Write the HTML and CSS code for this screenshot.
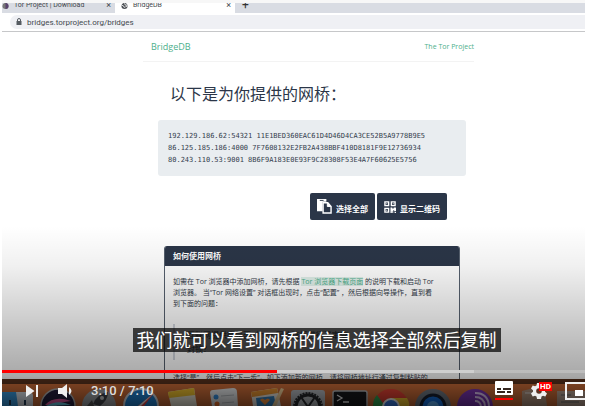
FILE: index.html
```html
<!DOCTYPE html>
<html lang="zh-CN">
<head>
<meta charset="utf-8">
<title>BridgeDB</title>
<link rel="stylesheet" href="styles.css">
</head>
<body>
<main class="player">
  <div class="tabs">
    <div class="tab">
      <svg class="favicon" viewBox="0 0 8 8"><circle cx="4" cy="4" r="3.5" fill="#777"/><path d="M4 .5a3.500 3.500 0 0 1 0 7z" fill="#59436d"/></svg>
      <span class="tab-title">Tor Project | Download</span><button class="tab-close" aria-label="关闭">×</button>
    </div>
    <div class="tab tab-active">
      <svg class="favicon" viewBox="0 0 8 8"><circle cx="4" cy="4" r="3.500" fill="#4b4f54"/><path d="M1 3l2 1 1 2M4 1l1 2h2M5 5l2-1" stroke="#fff" fill="none"/></svg>
      <span class="tab-title">BridgeDB</span><button class="tab-close" aria-label="关闭">×</button>
    </div>
    <button class="tab-new" aria-label="新标签页">+</button>
  </div>
  <div class="toolbar">
    <div class="address">
      <svg class="lock" viewBox="0 0 6 8"><path d="M1.500 3V2a1.500 1.500 0 0 1 3 0v1" fill="none" stroke="#555b61"/><rect x=".5" y="3" width="5" height="4" fill="#555b61"/></svg>
      <input class="url" type="text" aria-label="地址" value="bridges.torproject.org/bridges">
    </div>
  </div>

  <section class="page">
    <nav class="site-nav">
      <a class="brand" href="#">BridgeDB</a>
      <a class="project" href="#">The Tor Project</a>
    </nav>
    <div class="content">
      <h1>以下是为你提供的网桥：</h1>
      <pre class="bridges">192.129.186.62:54321 11E1BED360EAC61D4D46D4CA3CE52B5A9778B9E5
86.125.185.186:4000 7F7608132E2FB2A438BBF410D8181F9E12736934
80.243.110.53:9001 8B6F9A183E0E93F9C28308F53E4A7F60625E5756</pre>
      <div class="actions">
        <button class="action">
          <svg class="action-icon" viewBox="0 0 16 16"><path d="M0 0h10v3H6v10H0z" fill="#fff"/><path d="M3 1.500h4" stroke="#2b3648"/><path d="M6.500 4h5l3.500 4v7H6.500z" fill="#2b3648" stroke="#fff" stroke-width="1.500"/><path d="M11 4v4h4" fill="#fff" stroke="#fff"/></svg>
          <span>选择全部</span>
        </button>
        <button class="action">
          <svg class="action-icon action-qr" viewBox="0 0 13 13"><g fill="none" stroke="#fff" stroke-width="1.500"><path d="M1 1h4v4H1zM8 1h4v4H8zM1 8h4v4H1z"/></g><path d="M2.500 2.500h1v1h-1zM9.500 2.500h1v1h-1zM2.500 9.500h1v1h-1zM7 7h2v1h1.500V7H13v4h-2v-1h-1v3H9v-2H8.500v2H7zM11.500 12H13v1h-1.500z" fill="#fff"/></svg>
          <span>显示二维码</span>
        </button>
      </div>
      <article class="panel">
        <h2>如何使用网桥</h2>
        <div class="panel-body">
          <p>如需在 Tor 浏览器中添加网桥，请先根据 <a href="#">Tor 浏览器下载页面</a> 的说明下载和启动 Tor<br>浏览器。 当“Tor 网络设置” 对话框出现时，点击“配置” ，然后根据向导操作，直到看<br>到下面的问题：</p>
          <blockquote>互联网提供商是否对 Tor 网络连接进行了审查<br>封锁？</blockquote>
          <p>选择“是”，然后点击“下一步”。如下添加新的网桥，请将网桥地址行通过复制粘贴的</p>
        </div>
      </article>
    </div>
  </section>

  <div class="dock">
    <svg class="dock-icons" viewBox="0 0 583 22" preserveAspectRatio="xMinYMin slice" aria-hidden="true">
      <path d="M0 8h16v14H0z" fill="#3ba0e8"/><path d="M14 8h13q4 0 4 4v10H16z" fill="#e4eaf2"/><path d="M8 16v5M23 16v5" stroke="#23405c" stroke-width="2"/>
      <circle cx="56" cy="22" r="17" fill="#252040" stroke="#bbb" stroke-width="1.500"/><path d="M43 21q9-10 26-4-11 1-15 5z" fill="#e75ca5"/><path d="M44 22q12-7 25-1z" fill="#64d5ee"/>
      <circle cx="97" cy="22" r="17" fill="#a5a9ad"/><path d="M91 20q4-10 15-12 0 8-8 14z" fill="#44484f"/><circle cx="100" cy="14" r="2" fill="#ddd"/><path d="M90 16l-5 6h7z" fill="#555"/>
      <circle cx="139" cy="22" r="17" fill="#2188dc" stroke="#dce2e8" stroke-width="2"/><path d="M152 9l-10 13h-6z" fill="#fa4642"/><path d="M152 9l-16 13h3z" fill="#fff"/>
      <path d="M166 8l26-4 3 18h-26z" fill="#f4f0df"/><path d="M166 8l26-4 1 7-26 3z" fill="#f5c62e"/>
      <path d="M208 9q0-3 3-3l20-2q4 0 4 4l1 14h-26z" fill="#edf0f2"/><circle cx="214" cy="13" r="2.500" fill="#3695e8"/><circle cx="215" cy="20" r="2.500" fill="#f4762e"/><path d="M219 12l13-1M220 19l12-1" stroke="#bbc0c4"/>
      <path d="M249 8l26-4 4 18h-28z" fill="#f1eee7"/><path d="M249 8l26-4 1 5-26 4z" fill="#ee9834"/><path d="M254 14l18-2 2 10h-19z" fill="#3787c7"/><path d="M263 21l-5-5q2-3 5 0 3-3 5 0z" fill="#ff9a43"/><path d="M279 4l3 1-8 17h-4z" fill="#f6d49d"/>
      <rect x="289" y="6" width="34" height="24" rx="3" fill="#b9bec3"/><circle cx="306" cy="23" r="14" fill="none" stroke="#292c30" stroke-width="2" stroke-dasharray="2 1"/><circle cx="306" cy="23" r="12" fill="none" stroke="#25282c" stroke-width="3"/><path d="M306 23L299 13M306 23l7-10" stroke="#292c30" stroke-width="2"/>
      <rect x="331" y="7" width="34" height="23" rx="2" fill="#17191c" stroke="#b7babd" stroke-width="1.500"/><path d="M335 11l5 3-5 3M341 18h6" fill="none" stroke="#eee" stroke-width="1.300"/>
      <circle cx="389" cy="23" r="18" fill="#ea4335"/><path d="M371 22q0-7 4-11l8 11z" fill="#34a853"/><path d="M389 14h16q3 5 2 8h-12z" fill="#fbcb30"/><circle cx="389" cy="23" r="8" fill="#3b81eb" stroke="#fff" stroke-width="2"/>
      <circle cx="431" cy="23" r="18" fill="#737c87"/><circle cx="431" cy="23" r="12" fill="#1676e8" stroke="#172032" stroke-width="3"/><circle cx="431" cy="23" r="6" fill="#63b6ff"/>
      <circle cx="473" cy="23" r="18" fill="#7d36b6"/><g fill="none" stroke="#e5cdf7" stroke-width="2"><path d="M473 17q5 0 6 5M473 13q9 0 10 9M473 9q13 0 14 13"/></g>
      <path d="M520 7l12-3 11 3 2 15h-25z" fill="#aaa69f" opacity=".7"/><path d="M523 9h18" stroke="#ddd"/>
      <path d="M555 7h30v15h-30z" fill="#b4afa9" opacity=".8"/><path d="M559 11h10M559 18h18" stroke="#696969"/>
    </svg>
  </div>

  <div class="shade"></div>
  <div class="overlay">
    <p class="caption">我们就可以看到网桥的信息选择全部然后复制</p>
    <input class="seek" type="range" min="0" max="430" value="190" aria-label="播放进度">
    <div class="controls">
      <button class="control" aria-label="下一个"><svg width="12" height="12" viewBox="0 0 12 12"><path d="M0 0l8.500 6L0 12zM10 0h2v12h-2z" fill="#eee"/></svg></button>
      <button class="control volume" aria-label="音量"><svg width="15" height="14" viewBox="0 0 15 14"><path d="M0 4h4l5-4v14l-5-4H0z" fill="#eee"/><path d="M11 3q5 4 0 8z" fill="#eee"/></svg></button>
      <span class="time">3:10 / 7:10</span>
      <div class="controls-right">
        <button class="control" aria-label="字幕"><svg width="18" height="20" viewBox="0 0 18 20"><rect width="18" height="14" rx="1" fill="#fff"/><path d="M2 7h4v2H2zM8 7h8v2H8zM2 10h8v2H2zM12 10h4v2h-4z" fill="#35251e"/><path d="M0 17h18v2H0z" fill="red"/></svg></button>
        <button class="control settings" aria-label="设置"><svg width="16" height="16" viewBox="0 0 16 16"><path d="M6 0h4l.5 2.500 1.500.8L14.300 2.400l1.700 3.200-2 1.600v1.600l2 1.600-1.700 3.200-2.300-.9-1.500.8L10 16H6l-.5-2.500-1.500-.8-2.300.9L0 10.400l2-1.600V7.200L0 5.600l1.700-3.200 2.300.9 1.500-.8z" fill="#eee"/><circle cx="8" cy="8" r="2.800" fill="#5b3120"/></svg><span class="badge">HD</span></button>
        <button class="control" aria-label="迷你播放器"><svg width="20" height="18" viewBox="0 0 20 18"><path d="M22 1H1v16h21" fill="none" stroke="#eee" stroke-width="2"/><path d="M10 8h8v6h-8z" fill="#fff"/></svg></button>
      </div>
    </div>
  </div>
</main>
</body>
</html>
```
FILE: styles.css
```css
* { box-sizing: border-box; }
body {
  margin: 0;
  height: 100vh;
  padding: 0 22px 6px 2px;
  background: #fff;
  font-family: "Open Sans", "Noto Sans CJK SC", sans-serif;
}
button { border: 0; padding: 0; background: none; font-family: inherit; }
a { color: #4daf8c; text-decoration: none; }
svg { display: block; flex: none; }

.player {
  position: relative;
  display: flex;
  flex-direction: column;
  height: 100%;
  overflow: hidden;
}

.tabs {
  display: flex;
  flex: none;
  height: 13px;
  border-top: 3px solid #f7f7f7;
  background: #d9dce3;
  overflow: hidden;
  font-family: Roboto, sans-serif;
  color: #44484d;
}
.tab {
  display: flex;
  align-items: center;
  width: 113px;
  height: 10px;
  padding-right: 4px;
  gap: 5px;
  font-size: 7px;
  line-height: 4px;
}
.tab > * { margin-top: -6px; }
.tab > .favicon { width: 7px; height: 8px; margin-top: -4px; }
.tab-active { width: 120px; padding-left: 6px; background: #fff; }
.tab-title { flex: 1; white-space: nowrap; }
.tab-close { font-size: 9px; line-height: 4px; color: #44484d; }
.tab-new { height: 4px; padding-left: 7px; font-size: 12px; line-height: 4px; color: #333; }

.toolbar {
  flex: none;
  height: 19px;
  padding: 2px 0 2px 8px;
  border-bottom: 1px solid #c6c7c9;
}
.address {
  display: flex;
  align-items: center;
  height: 14px;
  padding-left: 6px;
  gap: 5px;
  border-radius: 7px 0 0 7px;
  background: #eff0f4;
}
.lock { width: 6px; height: 8px; }
.url {
  flex: 1;
  border: 0;
  padding: 0;
  outline: 0;
  background: none;
  font: 8px Roboto, sans-serif;
  color: #44494f;
}

.page {
  flex: 1;
  min-height: 0;
  overflow: hidden;
  padding: 0 111px 0 141px;
  background: #fff;
}
.site-nav {
  display: flex;
  justify-content: space-between;
  align-items: center;
  height: 30px;
  padding: 0 0 0 8px;
  border-bottom: 1px solid #f3f3f3;
}
.brand { font-size: 9px; }
.project { font-size: 7px; }
.content { padding: 20px 8px 0 15px; }
h1 {
  margin: 0 0 14px 12px;
  font-size: 16px;
  line-height: 24px;
  font-weight: 400;
  color: #2b3648;
}
.bridges {
  margin: 0;
  padding: 10px;
  border-radius: 3px;
  background: #e9edf0;
  font: 7px/12px "DejaVu Sans Mono", monospace;
  color: #34404e;
}
.actions {
  display: flex;
  justify-content: flex-end;
  gap: 2px;
  margin: 17px 19px 26px 0;
}
.action {
  display: flex;
  align-items: center;
  height: 27px;
  padding: 0 7px;
  gap: 4px;
  border-radius: 2px;
  background: #2b3648;
  color: #fff;
  font-size: 8px;
  font-weight: 700;
}
.action span { padding-top: 4px; }
.action-icon { width: 15px; height: 15px; }
.action-qr { width: 12px; height: 12px; }

.panel {
  margin: 0 6px;
  border: 1px solid #56606e;
  border-top: 0;
  border-radius: 3px 3px 0 0;
  overflow: hidden;
}
h2 {
  margin: 0;
  padding-left: 8px;
  background: #2b3648;
  color: #fff;
  font-size: 8px;
  line-height: 20px;
}
.panel-body {
  padding: 10px 0 80px 8px;
  font-size: 7px;
  line-height: 11px;
  color: #303946;
  white-space: nowrap;
}
.panel-body p { margin: 0; }
.panel-body a { background: #e0f0ea; }
blockquote {
  margin: 15px 0 12px 0;
  padding: 4px 0 4px 12px;
  border-left: 2px solid #d3d7df;
  font-size: 8px;
  line-height: 14px;
}

.dock {
  flex: none;
  height: 27px;
  border-top: 5px solid #59321d;
  background: #cf6e39;
}
.dock-icons { width: 100%; height: 22px; }

.shade {
  position: absolute;
  inset: auto 0 0 0;
  height: 180px;
  background: linear-gradient(transparent, rgba(0, 0, 0, .06) 40px, rgba(0, 0, 0, .2) 95px, rgba(0, 0, 0, .34) 150px, rgba(0, 0, 0, .42) 158px, rgba(0, 0, 0, .65));
}
.overlay {
  position: absolute;
  inset: auto 0 0 0;
  display: flex;
  flex-direction: column;
}
.caption {
  align-self: center;
  margin: 0 0 18px 46px;
  padding: 0 4px;
  background: rgba(8, 8, 8, .75);
  color: #fff;
  font-size: 18px;
  line-height: 24px;
}
.seek {
  appearance: none;
  width: 100%;
  height: 3px;
  margin: 0;
  background: linear-gradient(90deg, #f00 47.2%, #cfcfcf 47.2% 81%, rgba(255, 255, 255, .2) 81%);
}
.seek::-webkit-slider-thumb { appearance: none; width: 0; height: 0; }
.controls {
  display: flex;
  align-items: center;
  height: 33px;
  padding: 2px 0 0 24px;
}
.volume { margin: 0 18px 0 20px; }
.time { font: 500 13px Roboto, sans-serif; color: #ddd; }
.controls-right {
  display: flex;
  align-items: center;
  gap: 18px;
  margin-left: auto;
}
.settings { position: relative; }
.badge {
  position: absolute;
  top: -1px;
  left: 8px;
  padding: 0 1px;
  background: #f00;
  color: #fff;
  font: 700 8px/9px Roboto, sans-serif;
}
```
